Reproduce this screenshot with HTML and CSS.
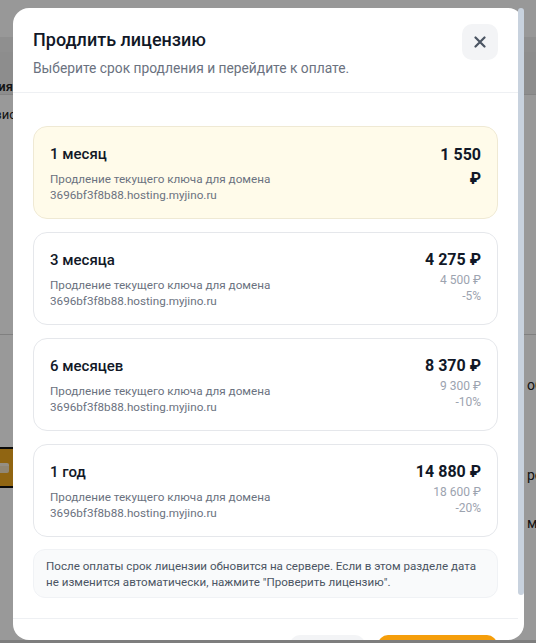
FILE: index.html
```html
<!DOCTYPE html>
<html lang="ru">
<head>
<meta charset="utf-8">
<title>Продлить лицензию</title>
<link rel="stylesheet" href="styles.css">
</head>
<body>
<div class="page">
  <div class="topbar"></div>
  <div class="band"></div>
  <div class="thead"><span class="cut">Лицензия</span></div>
  <div class="trow"><span class="cut cut-wide">Базис</span></div>
  <div class="spacer"></div>
  <div class="prow prow-1"><span class="rt">обновление</span></div>
  <div class="prow prow-2">
    <span class="amber-btn"><span class="amber-icon"></span></span>
    <span class="rt">роль</span>
  </div>
  <div class="prow prow-3"><span class="rt">метод</span></div>
  <div class="bottombar"></div>
</div>
<div class="overlay"></div>

<div class="modal">
  <div class="modal-panel">
    <div class="modal-content">
      <div class="modal-header">
        <div class="heading">
          <h2 class="modal-title">Продлить лицензию</h2>
          <p class="modal-subtitle">Выберите срок продления и перейдите к оплате.</p>
        </div>
        <button class="close-btn" type="button" aria-label="Закрыть">
          <svg width="12" height="12" viewBox="0 0 12 12"><path d="M1.5 1.5 L10.5 10.5 M10.5 1.5 L1.5 10.5" stroke="#4b5563" stroke-width="2.2" stroke-linecap="round" fill="none"/></svg>
        </button>
      </div>

      <div class="modal-body">
        <div class="plan plan-selected">
          <div class="plan-info">
            <div class="plan-name">1 месяц</div>
            <div class="plan-desc">Продление текущего ключа для домена<br>3696bf3f8b88.hosting.myjino.ru</div>
          </div>
          <div class="plan-price plan-price-narrow">
            <div class="price">1&nbsp;550 ₽</div>
          </div>
        </div>

        <div class="plan">
          <div class="plan-info">
            <div class="plan-name">3 месяца</div>
            <div class="plan-desc">Продление текущего ключа для домена<br>3696bf3f8b88.hosting.myjino.ru</div>
          </div>
          <div class="plan-price">
            <div class="price">4 275 ₽</div>
            <div class="old-price">4 500 ₽</div>
            <div class="discount">-5%</div>
          </div>
        </div>

        <div class="plan">
          <div class="plan-info">
            <div class="plan-name">6 месяцев</div>
            <div class="plan-desc">Продление текущего ключа для домена<br>3696bf3f8b88.hosting.myjino.ru</div>
          </div>
          <div class="plan-price">
            <div class="price">8 370 ₽</div>
            <div class="old-price">9 300 ₽</div>
            <div class="discount">-10%</div>
          </div>
        </div>

        <div class="plan">
          <div class="plan-info">
            <div class="plan-name">1 год</div>
            <div class="plan-desc">Продление текущего ключа для домена<br>3696bf3f8b88.hosting.myjino.ru</div>
          </div>
          <div class="plan-price">
            <div class="price">14 880 ₽</div>
            <div class="old-price">18 600 ₽</div>
            <div class="discount">-20%</div>
          </div>
        </div>

        <div class="notice">После оплаты срок лицензии обновится на сервере. Если в этом разделе дата не изменится автоматически, нажмите "Проверить лицензию".</div>
      </div>

      <div class="modal-footer">
        <button class="btn btn-cancel" type="button">Отмена</button>
        <button class="btn btn-pay" type="button">Оплатить</button>
      </div>
    </div>
  </div>
  <div class="scroll-thumb"></div>
</div>
</body>
</html>
```

FILE: styles.css
```css
* { box-sizing: border-box; }

html, body {
  margin: 0;
  padding: 0;
  height: 100%;
  overflow: hidden;
}

body {
  font-family: Roboto, "Noto Sans", Arial, sans-serif;
  background: #ffffff;
  color: #111827;
  position: relative;
}

/* ---------- background page ---------- */
.page {
  width: 536px;
  height: 643px;
  display: flex;
  flex-direction: column;
  background: #ffffff;
  font-size: 13px;
  color: #222;
  overflow: hidden;
}
.topbar { height: 37px; background: #fefefe; flex: none; }
.band { height: 15px; background: #eeeeee; flex: none; }
.thead {
  height: 43px;
  flex: none;
  background: #ececec;
  border-bottom: 1px solid #dcdcdc;
  display: flex;
  align-items: flex-end;
  line-height: 14px;
  font-weight: 600;
}
.trow {
  height: 38px;
  flex: none;
  display: flex;
  align-items: center;
}
.cut {
  width: 13px;
  display: flex;
  justify-content: flex-end;
  white-space: nowrap;
}
.cut-wide { width: 16px; }
.spacer {
  height: 202px;
  flex: none;
  border-bottom: 1px solid #d6d6d6;
}
.prow {
  flex: none;
  display: flex;
  align-items: center;
  justify-content: space-between;
}
.prow-1 { height: 100px; }
.prow-2 { height: 80px; padding-top: 12px; align-items: flex-start; }
.prow-3 { height: 40px; align-items: flex-start; }
.prow-1, .prow-3 { justify-content: flex-end; }
.rt {
  width: 9px;
  white-space: nowrap;
  overflow: visible;
  font-size: 14px;
}
.prow-2 .rt { margin-top: 20px; }
.bottombar {
  margin-top: auto;
  height: 3px;
  flex: none;
  background: #d2d2d2;
}
.amber-btn {
  width: 72px;
  height: 41px;
  margin-left: -52px;
  background: #f0a81e;
  border: 2px solid #111;
  border-radius: 4px;
  display: flex;
  align-items: center;
  justify-content: flex-end;
  padding-right: 9px;
}
.amber-icon {
  width: 12px;
  height: 10px;
  background: #f2e2c2;
  border-radius: 2px;
  border-top: 3px solid #f8efdd;
}

.overlay {
  position: absolute;
  inset: 0;
  background: rgba(0, 0, 0, 0.4);
}

/* ---------- modal ---------- */
.modal {
  position: absolute;
  top: 8px;
  left: 13px;
  width: 511px;
  height: 632px;
}
.modal-panel {
  width: 100%;
  height: 100%;
  background: #ffffff;
  border-radius: 16px;
  overflow: hidden;
}
.modal-content {
  width: 505px;
}
.scroll-thumb {
  position: absolute;
  top: 0;
  right: 0;
  width: 6px;
  height: 587px;
  background: #c8d2de;
  border-radius: 3px;
}

.modal-header {
  display: flex;
  justify-content: space-between;
  align-items: flex-start;
  padding: 16px 20px 14px 20px;
  border-bottom: 1px solid #eef0f3;
}
.heading { padding-top: 4px; }
.modal-title {
  margin: 0;
  font-size: 18px;
  line-height: 24px;
  font-weight: 500;
  color: #111827;
}
.modal-subtitle {
  margin: 6px 0 0 0;
  font-size: 13.8px;
  line-height: 20px;
  color: #6b7280;
}
.close-btn {
  width: 36px;
  height: 36px;
  border: none;
  border-radius: 10px;
  background: #f3f4f6;
  display: flex;
  align-items: center;
  justify-content: center;
  padding: 0;
  flex: none;
}

.modal-body {
  padding: 33px 20px 20px 20px;
  display: flex;
  flex-direction: column;
  gap: 13px;
}

.plan {
  display: flex;
  justify-content: space-between;
  align-items: flex-start;
  gap: 16px;
  padding: 16px 16px 15px 16px;
  border: 1px solid #e5e7eb;
  border-radius: 14px;
  background: #ffffff;
}
.plan-selected {
  background: #fffbea;
  border-color: #efe9d4;
}
.plan-name {
  font-size: 15px;
  line-height: 22px;
  font-weight: 500;
  color: #111827;
}
.plan-desc {
  margin-top: 6px;
  font-size: 11.7px;
  line-height: 16px;
  color: #6b7280;
}
.plan-price {
  text-align: right;
  white-space: nowrap;
}
.plan-price-narrow {
  white-space: normal;
  width: min-content;
}
.price {
  font-size: 16px;
  line-height: 22px;
  font-weight: 700;
  color: #111827;
}
.plan-price-narrow .price { line-height: 24px; }
.old-price, .discount {
  font-size: 12px;
  line-height: 16px;
  color: #9ca3af;
}
.old-price { margin-top: 1px; }

.notice {
  margin-top: -1px;
  padding: 8px 12px 7px 12px;
  border: 1px solid #f0f2f5;
  border-radius: 12px;
  background: #f9fafb;
  font-size: 11.6px;
  line-height: 16px;
  color: #4b5563;
}

.modal-footer {
  display: flex;
  justify-content: flex-end;
  gap: 13px;
  padding: 16px 21px 16px 20px;
  border-top: 1px solid #eef0f3;
}
.btn {
  height: 36px;
  border: none;
  border-radius: 10px;
  font-family: inherit;
  font-size: 14px;
  font-weight: 600;
}
.btn-cancel { width: 75px; background: #f3f4f6; color: #374151; }
.btn-pay { width: 119px; background: #f59e0b; color: #ffffff; }
```
